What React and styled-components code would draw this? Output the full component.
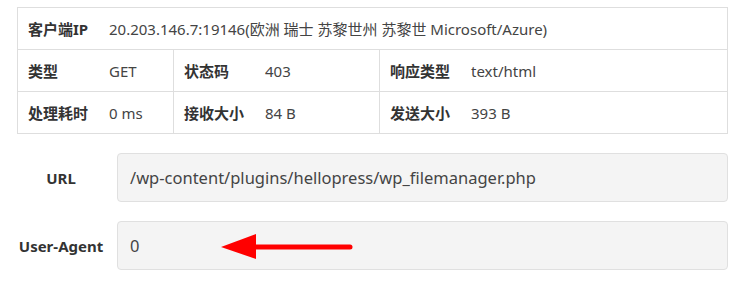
import styled, { createGlobalStyle } from "styled-components";

const GlobalStyle = createGlobalStyle`
  body {
    margin: 0;
    background: #fff;
    font-family: "Noto Sans", "Noto Sans CJK SC", sans-serif;
    color: #333;
  }
`;

const summary = [
  [
    ["类型", "GET"],
    ["状态码", "403"],
    ["响应类型", "text/html"],
  ],
  [
    ["处理耗时", "0 ms"],
    ["接收大小", "84 B"],
    ["发送大小", "393 B"],
  ],
];

const App = () => {
  return (
    <Page>
      <GlobalStyle />
      <InfoTable>
        <Row>
          <Cell $wide>
            <Label>客户端IP</Label>
            <Value>20.203.146.7:19146(欧洲 瑞士 苏黎世州 苏黎世 Microsoft/Azure)</Value>
          </Cell>
        </Row>
        {summary.map((row, i) => (
          <Row key={i}>
            {row.map(([label, value], j) => (
              <Cell key={label} $first={j === 0}>
                <Label>{label}</Label>
                <Value>{value}</Value>
              </Cell>
            ))}
          </Row>
        ))}
      </InfoTable>

      <Form>
        <Field>
          <FieldLabel>URL</FieldLabel>
          <FieldBox>/wp-content/plugins/hellopress/wp_filemanager.php</FieldBox>
        </Field>
        <Field>
          <FieldLabel>User-Agent</FieldLabel>
          <FieldBox>
            0
            <Arrow viewBox="0 0 134 26" aria-hidden="true">
              <line
                x1="34"
                y1="13"
                x2="130"
                y2="13"
                stroke="#f00"
                strokeWidth="5"
                strokeLinecap="round"
              />
              <polygon points="1,13 36,0 36,25" fill="#f00" />
            </Arrow>
          </FieldBox>
        </Field>
      </Form>
    </Page>
  );
};

export default App;

const Page = styled.div`
  padding: 7px 11px 0 17px;
  width: 711px;
`;

const InfoTable = styled.div`
  border: 1px solid #dedede;
  font-size: 15px;
`;

const Row = styled.div`
  display: grid;
  grid-template-columns: 155px 206px 1fr;
  height: 41px;
  border-top: 1px solid #dedede;

  &:first-child {
    border-top: none;
    grid-template-columns: 1fr;
  }
`;

const Cell = styled.div`
  display: grid;
  grid-template-columns: 81px 1fr;
  align-items: center;
  border-left: ${({ $first, $wide }) =>
    $first || $wide ? "none" : "1px solid #dedede"};
`;

const Label = styled.span`
  padding-left: 10px;
  font-weight: 700;
  color: #333;
  white-space: nowrap;
`;

const Value = styled.span`
  padding-left: 10px;
  color: #444;
  white-space: nowrap;
`;

const Form = styled.div`
  display: flex;
  flex-direction: column;
  gap: 19px;
  margin-top: 19px;
`;

const Field = styled.div`
  display: flex;
  align-items: center;
`;

const FieldLabel = styled.div`
  width: 88px;
  flex-shrink: 0;
  margin-right: 12px;
  text-align: center;
  font-size: 15px;
  font-weight: 700;
  color: #333;
`;

const FieldBox = styled.div`
  position: relative;
  flex: 1;
  height: 47px;
  display: flex;
  align-items: center;
  padding: 0 12px;
  background: #f4f4f4;
  border: 1px solid #e0e0e0;
  border-radius: 4px;
  font-size: 16.5px;
  color: #444;
`;

const Arrow = styled.svg`
  position: absolute;
  left: 102px;
  top: 12px;
  width: 134px;
  height: 26px;
`;
